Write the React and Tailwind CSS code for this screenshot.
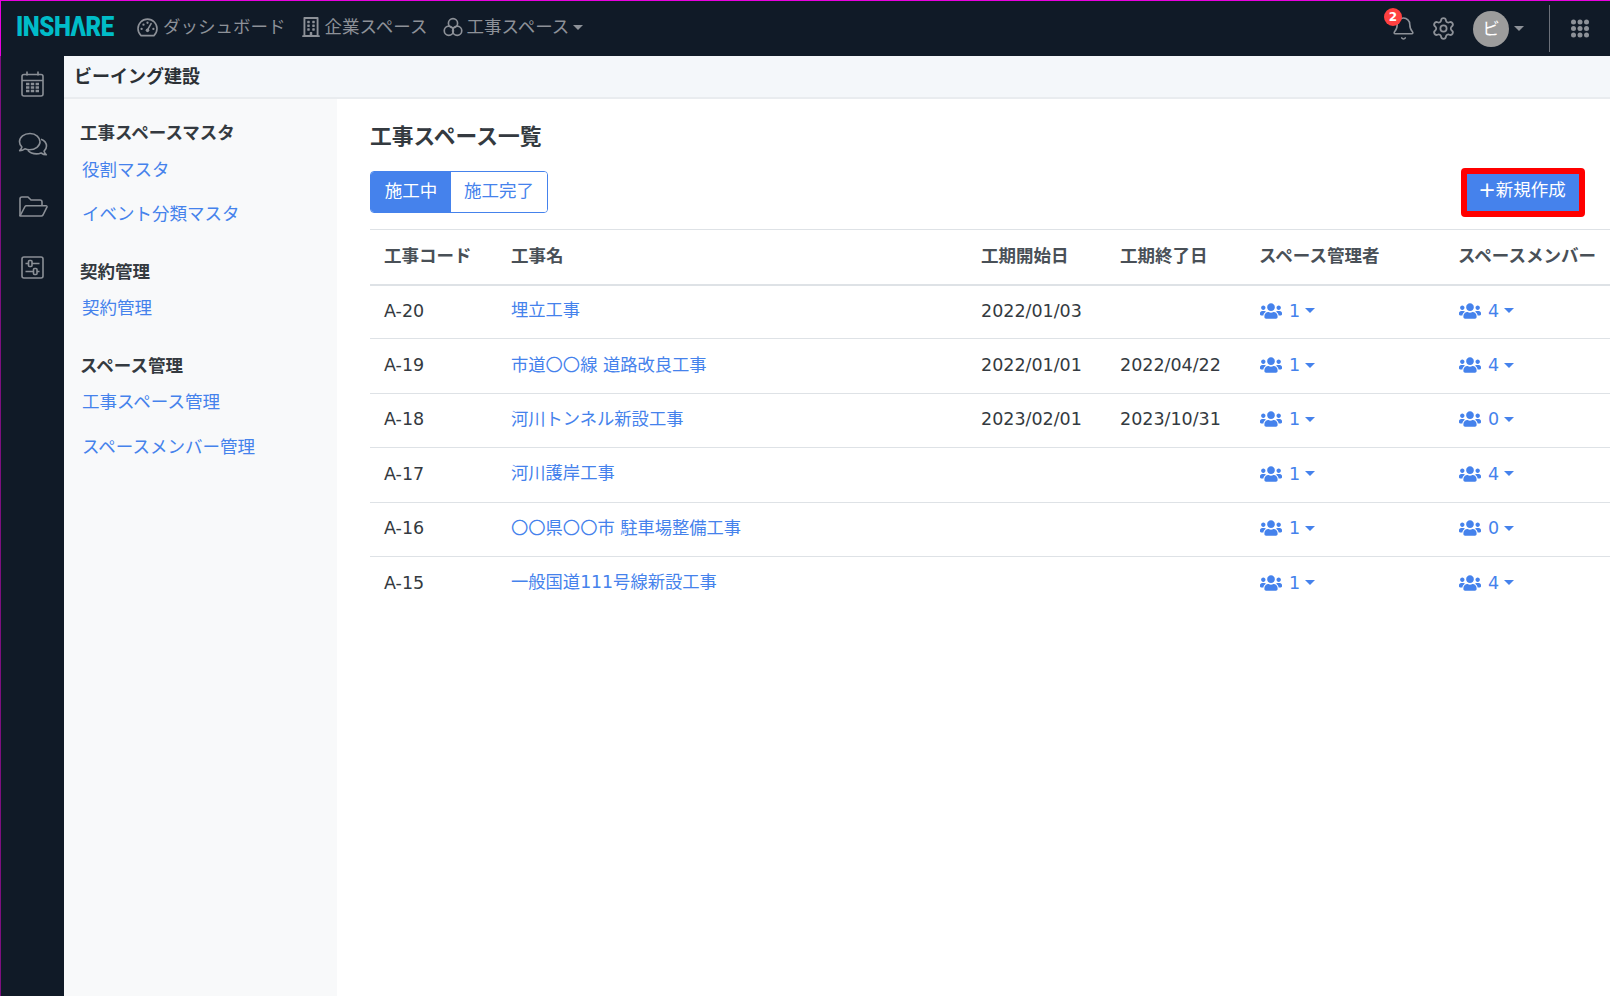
import React from 'react';
import { FaUsers, FaRegBuilding } from 'react-icons/fa';
import { Bell, Settings } from 'lucide-react';

const rows = [
  { code: 'A-20', name: '埋立工事', start: '2022/01/03', end: '', admins: 1, members: 4 },
  { code: 'A-19', name: '市道〇〇線 道路改良工事', start: '2022/01/01', end: '2022/04/22', admins: 1, members: 4 },
  { code: 'A-18', name: '河川トンネル新設工事', start: '2023/02/01', end: '2023/10/31', admins: 1, members: 0 },
  { code: 'A-17', name: '河川護岸工事', start: '', end: '', admins: 1, members: 4 },
  { code: 'A-16', name: '〇〇県〇〇市 駐車場整備工事', start: '', end: '', admins: 1, members: 0 },
  { code: 'A-15', name: '一般国道111号線新設工事', start: '', end: '', admins: 1, members: 4 },
];

function Caret({ className }) {
  return <span className={`inline-block w-0 h-0 border-x-[5px] border-t-[5px] border-x-transparent border-t-current ${className}`} />;
}

function GaugeIcon() {
  return (
    <svg width="21" height="19" viewBox="0 0 22 20" fill="none" stroke="currentColor" strokeWidth="1.7">
      <path d="M4.2 18.5a10 10 0 1 1 13.6 0z" strokeLinejoin="round" />
      <path d="M11 12.5 14.8 6" strokeLinecap="round" />
      <circle cx="11" cy="13" r="1.9" fill="currentColor" stroke="none" />
      <g fill="currentColor" stroke="none">
        <circle cx="4.8" cy="11.5" r="1.2" />
        <circle cx="6.8" cy="7" r="1.2" />
        <circle cx="11" cy="5" r="1.2" />
        <circle cx="17.2" cy="11.5" r="1.2" />
      </g>
    </svg>
  );
}

function CirclesIcon() {
  return (
    <svg width="20" height="20" viewBox="0 0 24 24" fill="none" stroke="currentColor" strokeWidth="2">
      <circle cx="12" cy="7.5" r="5.5" />
      <circle cx="7" cy="16.5" r="5.5" />
      <circle cx="17" cy="16.5" r="5.5" />
    </svg>
  );
}

function CalendarIcon() {
  return (
    <svg width="23" height="26" viewBox="0 0 23 26" fill="none" stroke="currentColor" strokeWidth="1.6">
      <rect x="1" y="3.5" width="21" height="21.5" rx="2" />
      <path d="M1 9.5h21M6 0.5v4M17 0.5v4" />
      <path d="M5 13h13M5 16.5h13M5 20h13" strokeWidth="2.4" strokeDasharray="3.4 1.4" />
    </svg>
  );
}

function CommentsIcon() {
  return (
    <svg width="30" height="25" viewBox="0 0 30 25" fill="none" stroke="currentColor" strokeWidth="1.6" strokeLinejoin="round">
      <path d="M12 1.5C6 1.5 1.5 5.2 1.5 9.8c0 2 .9 3.8 2.4 5.2-.4 1.4-1.2 2.6-2.2 3.6 2 0 3.8-.8 5.2-1.8 1.5.6 3 .9 4.6.9 6 0 10.5-3.7 10.5-7.9S18 1.5 12 1.5z" />
      <path d="M23 7.2c3.3 1.3 5.5 3.9 5.5 6.8 0 2-.9 3.8-2.4 5.2.4 1.4 1.2 2.6 2.2 3.6-2 0-3.8-.8-5.2-1.8-1.5.6-3 .9-4.6.9-3.6 0-6.8-1.4-8.7-3.6" />
    </svg>
  );
}

function FolderIcon() {
  return (
    <svg width="30" height="23" viewBox="0 0 30 23" fill="none" stroke="currentColor" strokeWidth="1.6" strokeLinejoin="round">
      <path d="M2 21V4a2 2 0 0 1 2-2h6l3 3h9a2 2 0 0 1 2 2v3.5" />
      <path d="M2 21 7 11.5a1.5 1.5 0 0 1 1.3-.8H28a1 1 0 0 1 .9 1.4L25 20a2 2 0 0 1-1.7 1H2z" />
    </svg>
  );
}

function SlidersIcon() {
  return (
    <svg width="23" height="23" viewBox="0 0 23 23" fill="none" stroke="currentColor" strokeWidth="1.6">
      <rect x="1" y="1" width="21" height="21" rx="2" />
      <path d="M4.5 7.5h3M11 7.5h7.5M4.5 15.5h8M16 15.5h2.5" />
      <rect x="7.5" y="4.5" width="3.5" height="6" rx="1" />
      <rect x="12.5" y="12.5" width="3.5" height="6" rx="1" />
    </svg>
  );
}

function DotsIcon() {
  return (
    <svg width="18" height="19" viewBox="0 0 18 19" fill="currentColor">
      {[3, 9.5, 16].map((y) =>
        [2.5, 9, 15.5].map((x) => <circle key={`${x}-${y}`} cx={x} cy={y} r="2.5" />)
      )}
    </svg>
  );
}

function SideGroup({ title, links }) {
  return (
    <div className="mb-[33.5px]">
      <div className="font-bold text-[#343a40] h-[24px] leading-[24px]">{title}</div>
      <div className="flex flex-col gap-[20.5px] mt-[12.5px] pl-[2px]">
        {links.map((l) => (
          <a key={l} className="text-[#4582ec] h-[24px] leading-[24px]">{l}</a>
        ))}
      </div>
    </div>
  );
}

function CountCell({ n }) {
  return (
    <span className="flex items-center text-[#4582ec] pl-[1px]">
      <FaUsers size={22} />
      <span className="ml-[7px]">{n}</span>
      <Caret className="ml-[5px]" />
    </span>
  );
}

export default function App() {
  return (
    <div className="h-screen w-full overflow-hidden flex flex-col bg-white text-[17.5px] text-[#343a40] font-['DejaVu_Sans','Noto_Sans_CJK_JP',sans-serif]">
      <header className="h-[56px] shrink-0 flex items-center bg-[#101a27] border-t border-l border-[#e800e0] text-[#8d9198]">
        <div className="w-[136px] pl-[15px] overflow-visible">
          <span className="inline-block origin-left scale-x-[0.86] text-[28px] leading-none font-black tracking-[-0.5px] text-[#00bcc8] font-['Roboto',sans-serif]">
            INSHΛRE
          </span>
        </div>
        <nav className="flex items-center mb-[3px]">
          <span className="flex items-center gap-[5px] mr-[15px]">
            <GaugeIcon />
            ダッシュボード
          </span>
          <span className="flex items-center gap-[4px] mr-[16px]">
            <FaRegBuilding size={20} />
            企業スペース
          </span>
          <span className="flex items-center gap-[3px]">
            <CirclesIcon />
            工事スペース
            <Caret className="ml-[1px]" />
          </span>
        </nav>
        <div className="ml-auto flex items-center h-full">
          <span className="relative mr-[15px]">
            <Bell size={25} strokeWidth={1.5} />
            <span className="absolute -top-[8px] -left-[7px] w-[18px] h-[18px] rounded-full bg-[#ff4040] text-white text-[12px] font-bold leading-[18px] text-center">2</span>
          </span>
          <Settings size={25} strokeWidth={1.7} className="mr-[17px]" />
          <span className="w-[36px] h-[36px] rounded-full bg-[#9c9c9c] text-white text-center leading-[36px]">ビ</span>
          <Caret className="ml-[5px] mr-[25px]" />
          <span className="w-px h-[47px] bg-[#6b7079] mr-[21px]" />
          <span className="mr-[21px]"><DotsIcon /></span>
        </div>
      </header>

      <div className="flex-1 flex min-h-0">
        <aside className="w-[64px] shrink-0 bg-[#101a27] border-l border-[#7d0f80] text-[#8a8f96] flex flex-col items-center pt-[15px]">
          <span className="h-[26px] flex items-center"><CalendarIcon /></span>
          <span className="h-[26px] mt-[34px] flex items-center"><CommentsIcon /></span>
          <span className="h-[26px] mt-[36px] flex items-center"><FolderIcon /></span>
          <span className="h-[26px] mt-[35px] flex items-center"><SlidersIcon /></span>
        </aside>

        <div className="flex-1 min-w-0 flex flex-col">
          <div className="h-[43px] shrink-0 bg-[#f4f7fa] border-b-2 border-[#e9ecef] pl-[10px] flex items-center text-[18px] font-semibold text-[#2b3035]">
            ビーイング建設
          </div>

          <div className="flex-1 flex min-h-0">
            <div className="w-[273px] shrink-0 bg-[#f8f9fa] pl-[16px] pt-[22px]">
              <SideGroup title="工事スペースマスタ" links={['役割マスタ', 'イベント分類マスタ']} />
              <SideGroup title="契約管理" links={['契約管理']} />
              <SideGroup title="スペース管理" links={['工事スペース管理', 'スペースメンバー管理']} />
            </div>

            <main className="flex-1 min-w-0 pt-[22px] pl-[33px] overflow-hidden">
              <h1 className="text-[21.75px] font-bold leading-[32px] text-[#343a40] mb-[18px]">工事スペース一覧</h1>

              <div className="h-[42px] flex items-center justify-between pr-[25px] mb-[16px]">
                <div className="flex h-[42px] rounded-[4px] border border-[#4582ec] overflow-hidden">
                  <span className="w-[80px] flex items-center justify-center bg-[#4582ec] text-white pb-[1px]">施工中</span>
                  <span className="w-[96px] flex items-center justify-center bg-white text-[#4582ec] pb-[1px]">施工完了</span>
                </div>
                <button className="w-[124px] h-[49px] -my-[4px] flex items-center justify-center rounded-[4px] border-[6px] border-[#ff0000] bg-[#4582ec] text-white pb-[3px] pr-[2px]">
                  <span className="text-[21px] leading-none">+</span>
                  新規作成
                </button>
              </div>

              <table className="w-[1240px] table-fixed border-collapse text-left">
                <colgroup>
                  <col className="w-[127px]" />
                  <col className="w-[470px]" />
                  <col className="w-[139px]" />
                  <col className="w-[139px]" />
                  <col className="w-[199px]" />
                  <col className="w-[166px]" />
                </colgroup>
                <thead>
                  <tr className="h-[55px] border-t border-b-2 border-[#dee2e6] text-[#495057] font-bold">
                    <th className="px-[14px] pb-[1px] whitespace-nowrap">工事コード</th>
                    <th className="px-[14px] pb-[1px] whitespace-nowrap">工事名</th>
                    <th className="px-[14px] pb-[1px] whitespace-nowrap">工期開始日</th>
                    <th className="px-[14px] pb-[1px] whitespace-nowrap">工期終了日</th>
                    <th className="px-[14px] pb-[1px] whitespace-nowrap">スペース管理者</th>
                    <th className="px-[14px] pb-[1px] whitespace-nowrap">スペースメンバー</th>
                  </tr>
                </thead>
                <tbody>
                  {rows.map((r, i) => (
                    <tr key={r.code} className={`h-[54.4px] ${i < rows.length - 1 ? 'border-b border-[#dee2e6]' : ''}`}>
                      <td className="px-[14px] pb-[2px]">{r.code}</td>
                      <td className="px-[14px] pb-[1px] text-[17.3px] text-[#4582ec]">{r.name}</td>
                      <td className="px-[14px] pb-[2px]">{r.start}</td>
                      <td className="px-[14px] pb-[2px]">{r.end}</td>
                      <td className="px-[14px] pb-[2px]"><CountCell n={r.admins} /></td>
                      <td className="px-[14px] pb-[2px]"><CountCell n={r.members} /></td>
                    </tr>
                  ))}
                </tbody>
              </table>
            </main>
          </div>
        </div>
      </div>
    </div>
  );
}
